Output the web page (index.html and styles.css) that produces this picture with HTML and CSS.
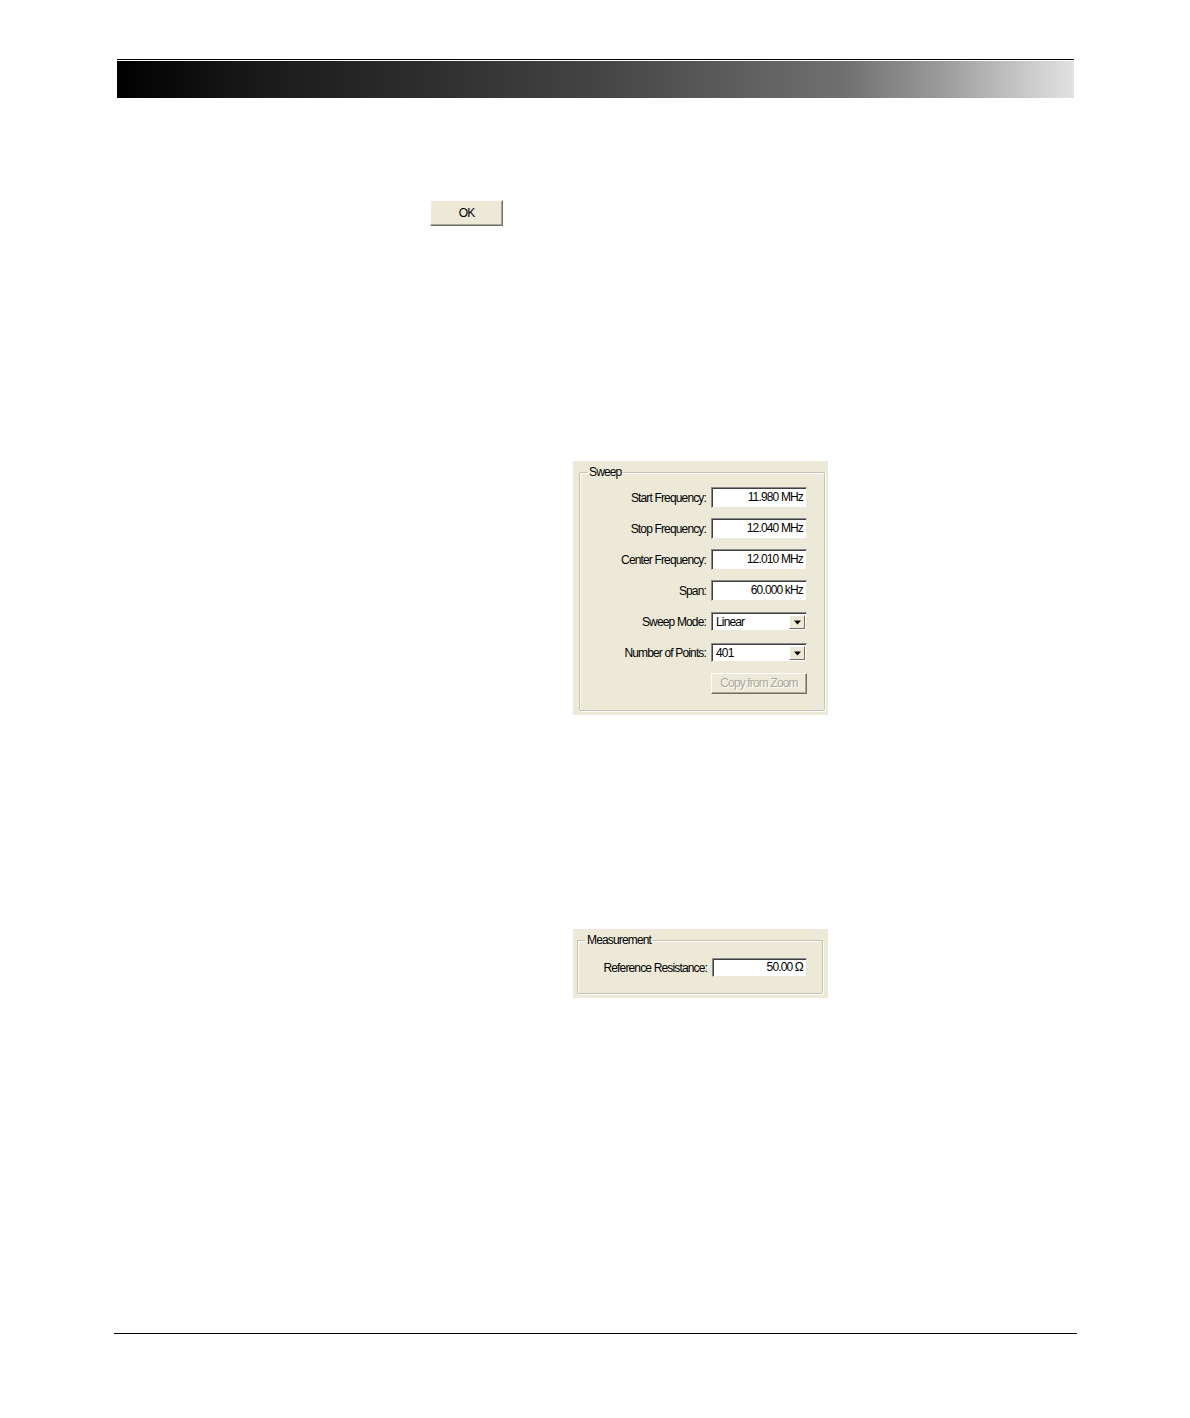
FILE: index.html
```html
<!DOCTYPE html>
<html>
<head>
<meta charset="utf-8">
<link rel="stylesheet" href="styles.css">
</head>
<body>
<div class="page">
  <div class="top-rule"></div>
  <div class="banner"></div>

  <div class="ok-row">
    <div class="btn ok">OK</div>
  </div>

  <div class="panel sweep">
    <fieldset class="group">
      <legend>Sweep</legend>
      <div class="form">
        <div class="lbl">Start Frequency:</div>
        <div class="field">11.980 MHz</div>
        <div class="lbl">Stop Frequency:</div>
        <div class="field">12.040 MHz</div>
        <div class="lbl">Center Frequency:</div>
        <div class="field">12.010 MHz</div>
        <div class="lbl">Span:</div>
        <div class="field">60.000 kHz</div>
        <div class="lbl">Sweep Mode:</div>
        <div class="combo"><span class="combo-text">Linear</span><span class="drop"><svg width="9" height="5" viewBox="0 0 9 5"><path d="M1 0.5h7l-3.5 4z" fill="#000"/></svg></span></div>
        <div class="lbl">Number of Points:</div>
        <div class="combo"><span class="combo-text">401</span><span class="drop"><svg width="9" height="5" viewBox="0 0 9 5"><path d="M1 0.5h7l-3.5 4z" fill="#000"/></svg></span></div>
        <div class="lbl"></div>
        <div class="btn copy">Copy from Zoom</div>
      </div>
    </fieldset>
  </div>

  <div class="panel meas">
    <fieldset class="group">
      <legend>Measurement</legend>
      <div class="form single">
        <div class="lbl">Reference Resistance:</div>
        <div class="field">50.00 Ω</div>
      </div>
    </fieldset>
  </div>

  <div class="bottom-rule"></div>
</div>
</body>
</html>
```

FILE: styles.css
```css
html, body {
  margin: 0;
  padding: 0;
  background: #ffffff;
}

.page {
  width: 1190px;
  height: 1418px;
  overflow: hidden;
  font-family: "Liberation Sans", Arial, sans-serif;
  font-size: 12px;
  letter-spacing: -0.85px;
  color: #000;
}

.top-rule {
  margin: 59px 0 0 117px;
  width: 957px;
  height: 1px;
  background: #000;
}

.banner {
  margin: 1px 0 0 117px;
  width: 957px;
  height: 37px;
  background: linear-gradient(to right, #000000 0%, #1a1a1a 15%, #2b2b2b 30%, #444444 50%, #5e5e5e 65%, #707070 76%, #9a9a9a 86%, #c4c4c4 94%, #e2e2e2 100%);
}

.ok-row {
  margin: 102px 0 0 430px;
  height: 27px;
}

.btn {
  box-sizing: border-box;
  background: #ece9d8;
  border: 1px solid;
  border-color: #ffffff #716f64 #716f64 #ffffff;
  box-shadow: inset -1px -1px 0 #aca899;
  text-align: center;
}

.ok {
  width: 73px;
  height: 26px;
  line-height: 24px;
  font-size: 12px;
}

.panel {
  box-sizing: border-box;
  width: 255px;
  margin-left: 573px;
  background: #ece9d8;
  padding: 4px 3px 4px 6px;
}

.sweep {
  margin-top: 234px;
  height: 254px;
}

.meas {
  margin-top: 214px;
  height: 69px;
  padding: 4px 5px 4px 4px;
}

.group {
  box-sizing: border-box;
  height: 100%;
  margin: 0;
  padding: 0;
  border: 1px solid #c5c2b2;
  border-radius: 2px;
  box-shadow: 1px 1px 0 #ffffff, inset 1px 1px 0 #ffffff;
}

.group legend {
  padding: 0 2px;
  margin-left: 7px;
  line-height: 14px;
  font-size: 12px;
}

.form {
  display: grid;
  grid-template-columns: 1fr 96px;
  grid-auto-rows: 31px;
  column-gap: 5px;
  align-items: center;
  padding: 3px 17px 0 0;
}

.single {
  padding: 7px 14px 0 0;
  grid-auto-rows: 27px;
}

.lbl {
  text-align: right;
  white-space: nowrap;
}

.field {
  box-sizing: border-box;
  height: 21px;
  line-height: 18px;
  background: #ffffff;
  border: 1px solid;
  border-color: #8a8a8a #ece9d8 #ece9d8 #8a8a8a;
  box-shadow: inset 1px 1px 0 #404040;
  text-align: right;
  padding-right: 3px;
}

.meas .field {
  height: 19px;
  line-height: 16px;
  width: 95px;
}

.combo {
  box-sizing: border-box;
  height: 19px;
  background: #ffffff;
  border: 1px solid;
  border-color: #8a8a8a #ece9d8 #ece9d8 #8a8a8a;
  box-shadow: inset 1px 1px 0 #404040;
  display: flex;
  align-items: stretch;
  padding: 2px 1px 1px 2px;
}

.combo-text {
  flex: 1;
  line-height: 15px;
  padding-left: 2px;
}

.drop {
  box-sizing: border-box;
  width: 16px;
  background: #ece9d8;
  border: 1px solid;
  border-color: #ffffff #716f64 #716f64 #ffffff;
  display: flex;
  align-items: center;
  justify-content: center;
}

.copy {
  height: 21px;
  line-height: 19px;
  color: #aca899;
  text-shadow: 1px 1px 0 #ffffff;
}

.bottom-rule {
  margin: 335px 0 0 114px;
  width: 963px;
  height: 1px;
  background: #000;
}
```
